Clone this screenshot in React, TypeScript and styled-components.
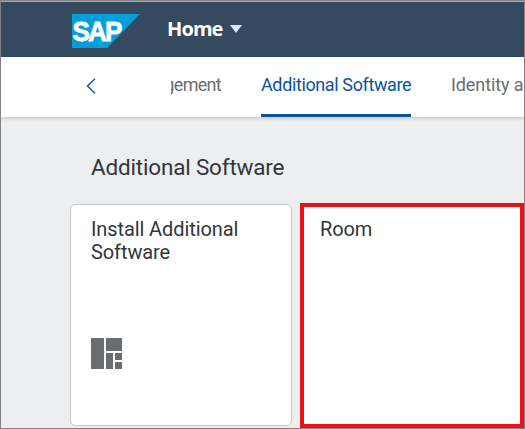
import React from "react";
import styled, { createGlobalStyle } from "styled-components";

const GlobalStyle = createGlobalStyle`
  * { box-sizing: border-box; }
  body { margin: 0; overflow: hidden; font-family: Roboto, "Liberation Sans", sans-serif; }
`;

const Frame = styled.div`
  width: 525px;
  height: 429px;
  border: 1px solid #828284;
  background: #edeef0;
  overflow: hidden;
  display: flex;
  flex-direction: column;
`;

const ShellBar = styled.header`
  height: 56px;
  flex: none;
  background: #354a5f;
  border-top: 1px solid #a5adb7;
  display: flex;
  align-items: flex-start;
  padding: 12px 0 0 71px;
`;

const Logo = styled.svg`
  display: block;
  width: 68px;
  height: 34px;
  flex: none;
`;

const HomeMenu = styled.div`
  display: flex;
  align-items: center;
  margin: 3px 0 0 27px;
  height: 24px;
  gap: 7px;
  color: #fff;
  font: 700 20px/24px "Open Sans", sans-serif;
`;

const HomeLabel = styled.span`
  width: 56px;
  white-space: nowrap;
  letter-spacing: -0.9px;
`;

const TabBar = styled.nav`
  height: 60px;
  flex: none;
  background: #fff;
  box-shadow: 0 1px 4px rgba(0, 0, 0, 0.2);
  display: flex;
  position: relative;
`;

const BackArrow = styled.svg`
  width: 10px;
  height: 16px;
  margin: 21px 0 0 85px;
  flex: none;
`;

const TabList = styled.div`
  margin-left: 75px;
  flex: 1;
  min-width: 0;
  overflow: hidden;
  display: flex;
  gap: 40px;
`;

const Tab = styled.div<{ $active?: boolean; $width: number; $clipStart?: boolean; $spacing: number }>`
  flex: none;
  width: ${(p) => p.$width}px;
  height: 60px;
  display: flex;
  justify-content: ${(p) => (p.$clipStart ? "flex-end" : "flex-start")};
  overflow: hidden;
  white-space: nowrap;
  color: ${(p) => (p.$active ? "#0854a0" : "#6a6d70")};
  border-bottom: 3px solid ${(p) => (p.$active ? "#0854a0" : "transparent")};
  font-size: 18px;
  line-height: 56px;
  letter-spacing: ${(p) => p.$spacing}px;
`;

const Content = styled.main`
  flex: 1;
  padding: 36px 0 0 69px;
`;

const GroupTitle = styled.h2`
  margin: 0 0 0 21px;
  height: 28px;
  font-size: 22.5px;
  font-weight: 400;
  line-height: 28px;
  letter-spacing: -0.18px;
  color: #32363a;
  white-space: nowrap;
`;

const Tiles = styled.div`
  display: flex;
  align-items: flex-start;
  margin-top: 22px;
`;

const Tile = styled.article<{ $highlighted?: boolean }>`
  flex: none;
  display: flex;
  flex-direction: column;
  background: #fff;
  color: #32363a;
  width: ${(p) => (p.$highlighted ? 224 : 222)}px;
  height: ${(p) => (p.$highlighted ? 225 : 222)}px;
  margin: ${(p) => (p.$highlighted ? "0 0 0 8px" : "1px 0 0")};
  padding: ${(p) => (p.$highlighted ? "11px 16px" : "13px 20px")};
  border: ${(p) => (p.$highlighted ? "4px solid #ee1115" : "1px solid #c5c7c9")};
  border-radius: ${(p) => (p.$highlighted ? 0 : 5)}px;
`;

const TileTitle = styled.h3`
  margin: 0;
  height: 46px;
  font-size: 20px;
  font-weight: 400;
  line-height: 23px;
  letter-spacing: -0.1px;
`;

const TileIcon = styled.svg`
  width: 31px;
  height: 31px;
  margin-top: 74px;
`;

export default function App() {
  return (
    <>
      <GlobalStyle />
      <Frame>
        <ShellBar>
          <Logo viewBox="0 0 68 34" role="img" aria-label="SAP">
            <path d="M0 0H68L35 34H0Z" fill="#049fdb" />
            <text
              x="0.6"
              y="27"
              fill="#fff"
              stroke="#fff"
              strokeWidth="0.8"
              fontFamily="Liberation Sans, sans-serif"
              fontWeight="700"
              fontSize="28"
              letterSpacing="-2"
              textLength="48"
              lengthAdjust="spacingAndGlyphs"
            >
              SAP
            </text>
          </Logo>
          <HomeMenu>
            <HomeLabel>Home</HomeLabel>
            <svg width="12" height="8" viewBox="0 0 12 8">
              <path d="M0 0H12L6 8Z" fill="#d1e8ff" />
            </svg>
          </HomeMenu>
        </ShellBar>
        <TabBar>
          <BackArrow viewBox="0 0 10 16" fill="none" stroke="#0854a0" strokeWidth="1.4">
            <path d="M9 0.7L1.5 8L9 15.3" />
          </BackArrow>
          <TabList>
            <Tab $width={50} $clipStart $spacing={-0.7}>Management</Tab>
            <Tab $width={150} $spacing={-0.38} $active>Additional Software</Tab>
            <Tab $width={150} $spacing={-0.1}>Identity and Access</Tab>
          </TabList>
        </TabBar>
        <Content>
          <GroupTitle>Additional Software</GroupTitle>
          <Tiles>
            <Tile>
              <TileTitle>Install Additional Software</TileTitle>
              <TileIcon viewBox="0 0 31 31" fill="#6a6d70">
                <path d="M0 0H13V31H0ZM15 0H31V13H15ZM15 15H22V31H15ZM24 15H31V22H24ZM24 24H31V31H24Z" />
              </TileIcon>
            </Tile>
            <Tile $highlighted>
              <TileTitle>Room</TileTitle>
            </Tile>
          </Tiles>
        </Content>
      </Frame>
    </>
  );
}
